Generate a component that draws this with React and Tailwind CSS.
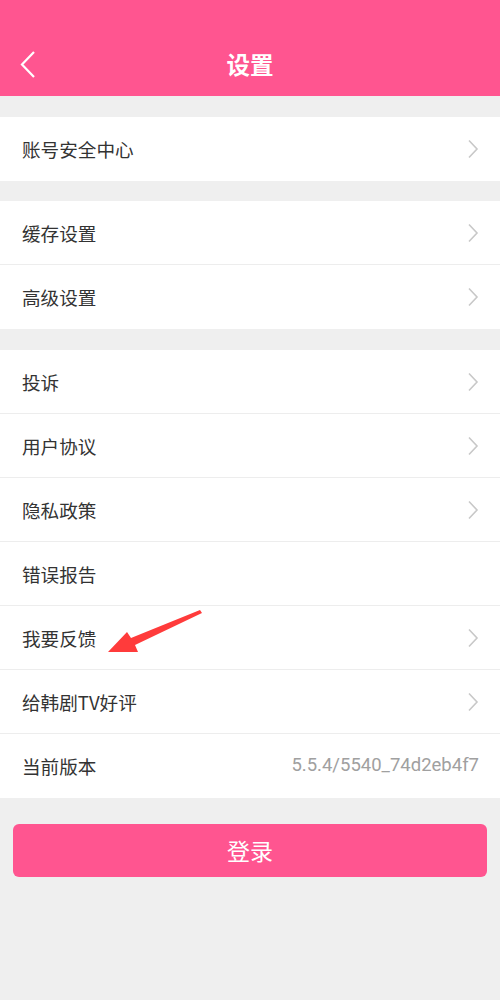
import React from "react";

const PINK = "bg-[#ff5590]";

const Chevron = () => (
  <svg width="12" height="20" viewBox="0 0 12 20" className="shrink-0">
    <path d="M2 1.5 L10 10 L2 18.5" fill="none" stroke="#c8c8c8" strokeWidth="1.6" />
  </svg>
);

const Row = ({ label, value, arrow = true }) => (
  <div className="flex items-center justify-between h-[64px] pl-[22px] pr-[21px]">
    <span className="text-[18.6px] text-[#333]">{label}</span>
    {value ? (
      <span
        className="text-[18.5px] text-[#a0a0a0]"
        style={{ fontFamily: 'Roboto, "Noto Sans", sans-serif' }}
      >
        {value}
      </span>
    ) : (
      arrow && <Chevron />
    )}
  </div>
);

const Group = ({ children }) => (
  <div className="bg-white divide-y divide-[#ededed]">{children}</div>
);

export default function App() {
  return (
    <div
      className="relative w-[500px] h-[1000px] bg-[#efefef] overflow-hidden"
      style={{ fontFamily: '"Noto Sans CJK SC", "Noto Sans", sans-serif' }}
    >
      {/* header */}
      <div className={`${PINK} h-[96px] relative flex items-end justify-center pb-[14px]`}>
        <svg width="20" height="30" viewBox="0 0 20 30" className="absolute left-[16px] top-[50px]">
          <path d="M18 2 L6 14.5 L18 27" fill="none" stroke="#fff" strokeWidth="2.2" />
        </svg>
        <span className="text-white text-[23.5px] font-bold">设置</span>
      </div>

      <div className="h-[21px]" />
      <Group>
        <Row label="账号安全中心" />
      </Group>

      <div className="h-[20px]" />
      <Group>
        <Row label="缓存设置" />
        <Row label="高级设置" />
      </Group>

      <div className="h-[21px]" />
      <Group>
        <Row label="投诉" />
        <Row label="用户协议" />
        <Row label="隐私政策" />
        <Row label="错误报告" arrow={false} />
        <Row label="我要反馈" />
        <Row label="给韩剧TV好评" />
        <Row label="当前版本" value="5.5.4/5540_74d2eb4f7" />
      </Group>

      <div className="px-[13px] mt-[26px]">
        <button className={`${PINK} w-full h-[53px] rounded-[6px] text-white text-[23px]`}>登录</button>
      </div>

      {/* annotation arrow */}
      <svg width="500" height="1000" className="absolute inset-0 pointer-events-none">
        <polygon
          points="108,652 127,632 131,638 200,610 202,613 135,645 138,652"
          fill="#ff3b3b"
        />
      </svg>
    </div>
  );
}
